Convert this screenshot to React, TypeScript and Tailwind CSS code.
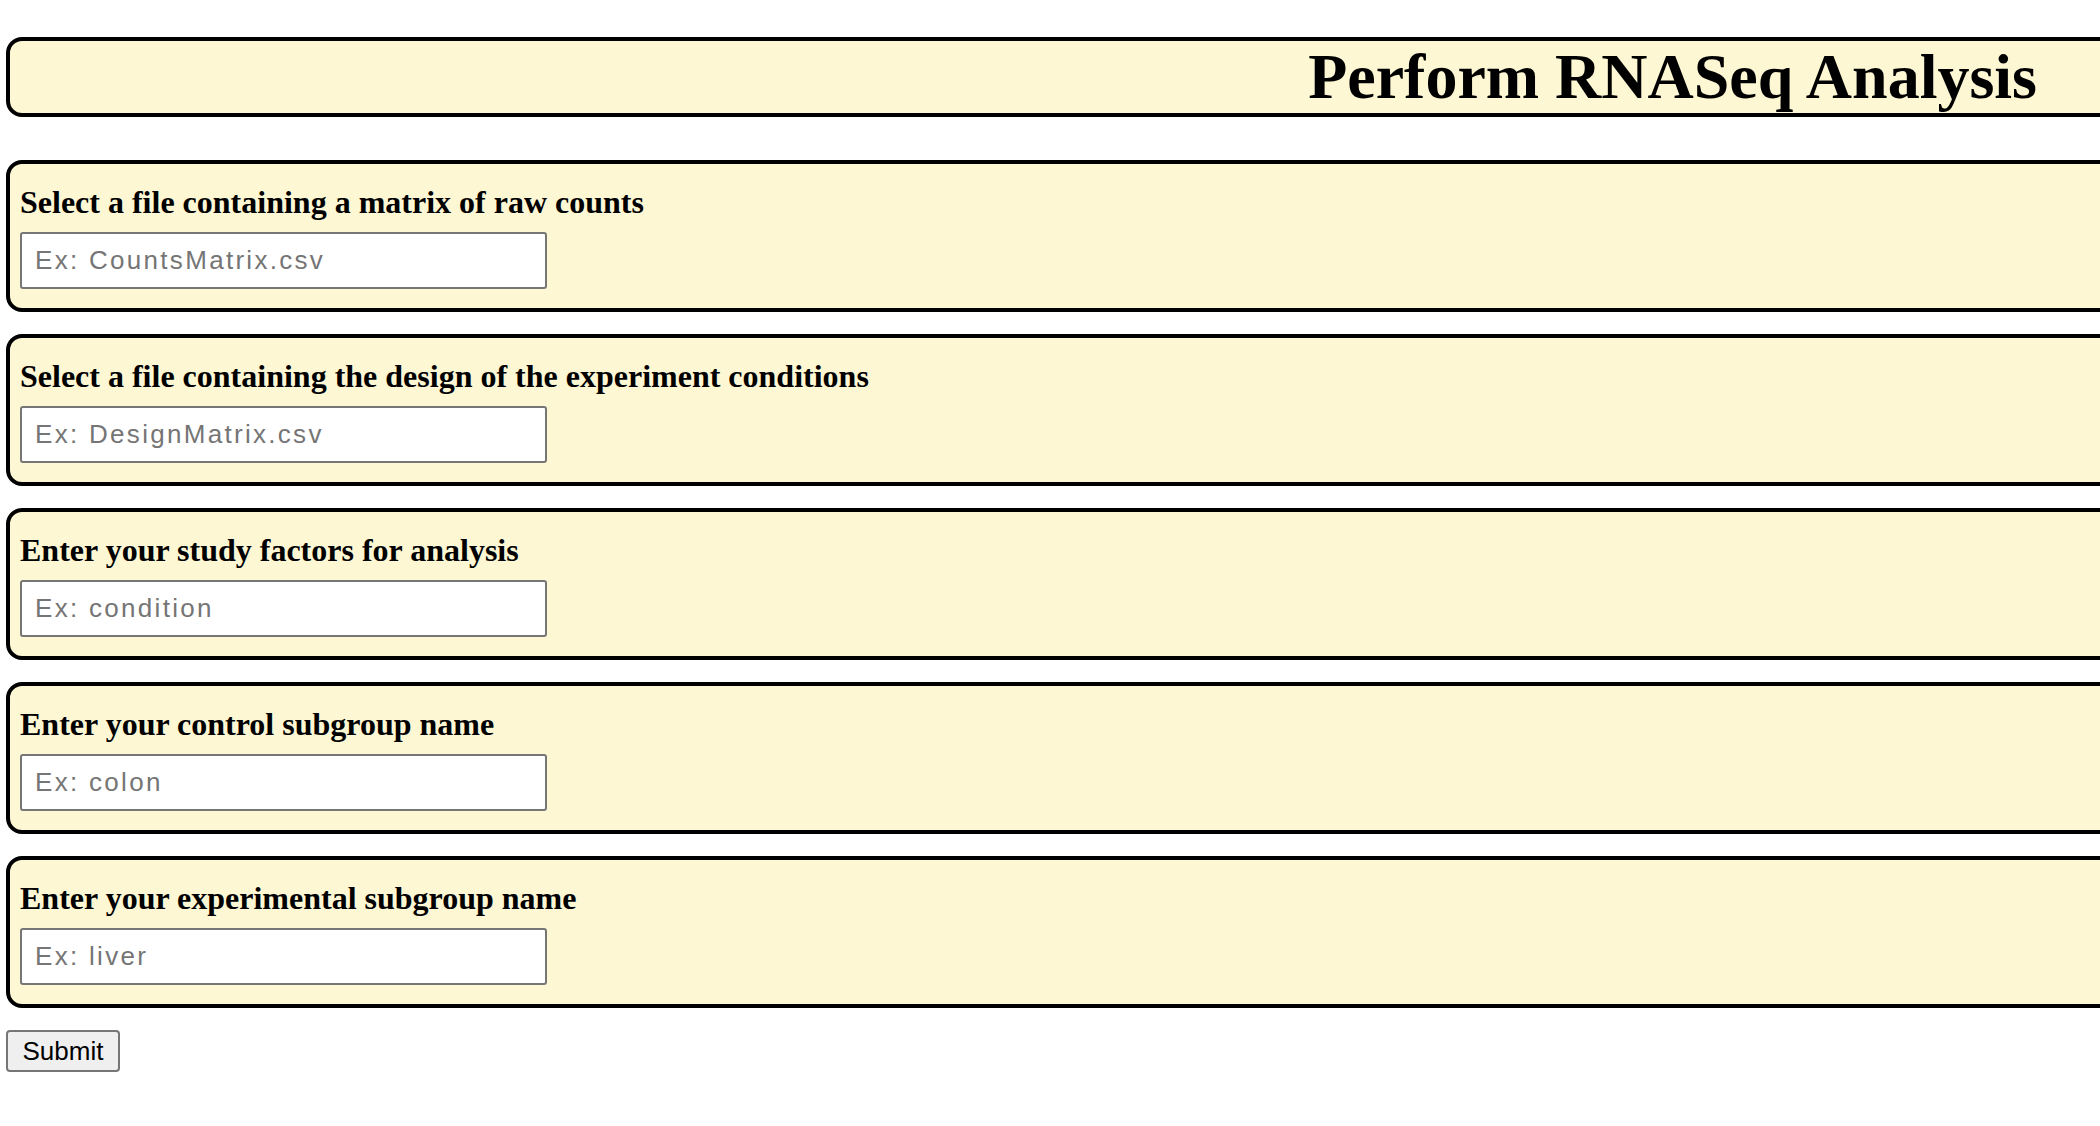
type Field = {
  label: string;
  placeholder: string;
};

const fields: Field[] = [
  { label: "Select a file containing a matrix of raw counts", placeholder: "Ex: CountsMatrix.csv" },
  { label: "Select a file containing the design of the experiment conditions", placeholder: "Ex: DesignMatrix.csv" },
  { label: "Enter your study factors for analysis", placeholder: "Ex: condition" },
  { label: "Enter your control subgroup name", placeholder: "Ex: colon" },
  { label: "Enter your experimental subgroup name", placeholder: "Ex: liver" },
];

const FieldBox = ({ label, placeholder }: Field) => {
  return (
    <div className="w-[2140px] h-[152px] border-4 border-black rounded-[16px] bg-[#fdf7d4] pl-[10px] pt-[20px]">
      <h3 className="m-0 text-[32px] leading-[37px] font-bold text-black font-['Liberation_Serif',serif]">
        {label}
      </h3>
      <input
        type="text"
        placeholder={placeholder}
        className="mt-[11px] block w-[527px] h-[57px] bg-white border-2 border-[#767676] rounded-[3px] pl-[13px] text-[26px] tracking-[2.3px] text-black placeholder:text-[#757575] font-['Liberation_Sans',Arial,sans-serif] outline-none"
      />
    </div>
  );
};

export default function App() {
  return (
    <div className="w-screen min-h-screen overflow-hidden bg-white pt-[37px] pl-[6px]">
      <div className="w-[2140px] h-[80px] border-4 border-black rounded-[16px] bg-[#fdf7d4] flex items-center justify-end pr-[105px]">
        <h1 className="m-0 text-[64px] leading-[72px] font-bold text-black font-['Liberation_Serif',serif]">
          Perform RNASeq Analysis
        </h1>
      </div>

      <div className="mt-[43px] flex flex-col gap-[22px]">
        {fields.map((f) => (
          <FieldBox key={f.label} label={f.label} placeholder={f.placeholder} />
        ))}
      </div>

      <button
        type="button"
        className="mt-[22px] w-[114px] h-[42px] bg-[#efefef] border-2 border-[#767676] rounded-[4px] text-[26px] text-black font-['Liberation_Sans',Arial,sans-serif] flex items-center justify-center"
      >
        Submit
      </button>
    </div>
  );
}
